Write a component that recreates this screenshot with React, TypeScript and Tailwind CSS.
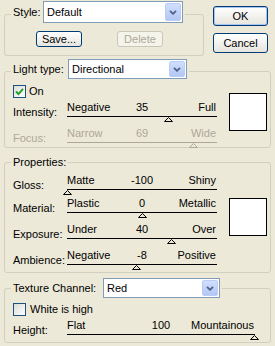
import React from "react";

type SliderProps = {
  left: string;
  value: string;
  right: string;
  frac: number;
  wide?: boolean;
  disabled?: boolean;
};

function Slider({ left, value, right, frac, wide, disabled }: SliderProps) {
  const width = wide ? 188 : 150;
  const offset = Math.round(frac * (width - 1)) - 4;
  const text = disabled ? "text-[#ACA899]" : "text-black";
  const line = disabled ? "bg-[#ACA899]" : "bg-black";
  const stroke = disabled ? "#ACA899" : "#000000";

  return (
    <div className={`flex flex-col ${wide ? "w-[188px]" : "w-[150px]"}`}>
      <div className={`grid grid-cols-[1fr_auto_1fr] h-[13px] leading-[13px] ${text}`}>
        <span className="justify-self-start">{left}</span>
        <span>{value}</span>
        <span className="justify-self-end pr-px">{right}</span>
      </div>
      <div className={`mt-[2px] h-px ${line}`} />
      <div className="h-[4px]">
        <svg width="9" height="5" style={{ marginLeft: offset }} className="overflow-visible">
          <polygon points="4.5,0.5 8.5,4.5 0.5,4.5" fill="#ECE9D8" stroke={stroke} strokeWidth="1" />
        </svg>
      </div>
    </div>
  );
}

function SliderRow(props: SliderProps & { label: string; className?: string }) {
  const { label, className, ...rest } = props;
  return (
    <div className={`flex ${className ?? ""}`}>
      <span className={`w-[54px] pt-[5px] ${rest.disabled ? "text-[#ACA899]" : ""}`}>{label}</span>
      <Slider {...rest} />
    </div>
  );
}

function Select({ value, className }: { value: string; className: string }) {
  return (
    <div className={`flex items-center bg-white border border-[#7F9DB9] ${className}`}>
      <span className="flex-1 pl-[3px] leading-[13px]">{value}</span>
      <div className="mr-px w-[16px] h-[calc(100%-2px)] rounded-[2px] border border-[#B9CCF6] bg-linear-to-b from-[#D1DEFD] to-[#B3C7F5] flex items-center justify-center">
        <svg width="8" height="5" viewBox="0 0 8 5">
          <polyline points="1,0.8 4,3.8 7,0.8" fill="none" stroke="#4D6185" strokeWidth="1.8" />
        </svg>
      </div>
    </div>
  );
}

function Checkbox({ checked }: { checked?: boolean }) {
  return (
    <div className="w-[13px] h-[13px] border border-[#1C5180] bg-linear-to-br from-[#DCDCD7] to-white flex items-center justify-center">
      {checked && (
        <svg width="9" height="9" viewBox="0 0 9 9">
          <polyline points="1,4.5 3.5,7 8,1.8" fill="none" stroke="#21A121" strokeWidth="1.9" />
        </svg>
      )}
    </div>
  );
}

function XpButton({ children, className, disabled }: { children: React.ReactNode; className: string; disabled?: boolean }) {
  return (
    <button
      className={`rounded-[3px] border leading-[13px] ${
        disabled
          ? "border-[#C9C7BA] bg-[#F5F4EA] text-[#ACA899]"
          : "border-[#003C74] bg-linear-to-b from-white to-[#E6E5DE]"
      } ${className}`}
    >
      {children}
    </button>
  );
}

export default function App() {
  return (
    <div className="w-[275px] h-[346px] overflow-hidden bg-[#ECE9D8] text-black text-[11px] leading-[13px] font-['Liberation_Sans',Arial,sans-serif]">
      <div className="flex">
        <fieldset className="ml-[4px] mt-[1px] w-[200px] h-[55px] border border-[#D0D0BF] rounded-[3px]">
          <legend className="ml-[6px] px-[2px] pb-[4px]">
            <div className="flex items-center">
              <span className="w-[30px]">Style:</span>
              <Select value="Default" className="w-[140px] h-[22px]" />
            </div>
          </legend>
          <div className="flex mt-[4px] pl-[31px]">
            <XpButton className="w-[46px] h-[16px]">Save...</XpButton>
            <XpButton className="ml-[35px] w-[46px] h-[16px]" disabled>
              Delete
            </XpButton>
          </div>
        </fieldset>
        <div className="ml-auto mr-[7px] pt-[6px] flex flex-col gap-[7px]">
          <XpButton className="w-[55px] h-[20px] shadow-[inset_0_0_0_1px_#A8C4F0]">OK</XpButton>
          <XpButton className="w-[55px] h-[20px]">Cancel</XpButton>
        </div>
      </div>

      <fieldset className="ml-[4px] mt-[3px] w-[267px] border border-[#D0D0BF] rounded-[3px]">
        <legend className="ml-[6px] px-[2px] pb-[4px]">
          <div className="flex items-center">
            <span className="w-[55px]">Light type:</span>
            <Select value="Directional" className="w-[119px] h-[20px]" />
          </div>
        </legend>
        <div className="flex pl-[8px]">
          <div className="flex flex-col w-[204px]">
            <div className="mt-[2px] flex items-center h-[13px]">
              <Checkbox checked />
              <span className="ml-[3px]">On</span>
            </div>
            <SliderRow className="mt-[3px]" label="Intensity:" left="Negative" value="35" right="Full" frac={0.675} />
            <SliderRow className="mt-[6px]" label="Focus:" left="Narrow" value="69" right="Wide" frac={0.845} disabled />
          </div>
          <div className="ml-[12px] mt-[10px] w-[38px] h-[38px] bg-white border border-black" />
        </div>
      </fieldset>

      <fieldset className="ml-[4px] mt-[8px] w-[267px] border border-[#D0D0BF] rounded-[3px]">
        <legend className="ml-[6px] px-[2px]">Properties:</legend>
        <div className="flex pl-[8px] pb-[3px]">
          <div className="flex flex-col w-[204px]">
            <SliderRow className="mt-[5px]" label="Gloss:" left="Matte" value="-100" right="Shiny" frac={0} />
            <SliderRow className="mt-[3px]" label="Material:" left="Plastic" value="0" right="Metallic" frac={0.5} />
            <SliderRow className="mt-[6px]" label="Exposure:" left="Under" value="40" right="Over" frac={0.7} />
            <SliderRow className="mt-[6px]" label="Ambience:" left="Negative" value="-8" right="Positive" frac={0.46} />
          </div>
          <div className="ml-[12px] mt-[29px] w-[38px] h-[38px] bg-white border border-black" />
        </div>
      </fieldset>

      <fieldset className="ml-[4px] mt-[5px] w-[267px] border border-[#D0D0BF] rounded-[3px]">
        <legend className="ml-[6px] px-[2px]">
          <div className="flex items-center">
            <span className="w-[90px]">Texture Channel:</span>
            <Select value="Red" className="w-[117px] h-[20px]" />
          </div>
        </legend>
        <div className="flex flex-col pl-[8px] pb-[3px]">
          <div className="mt-[5px] flex items-center h-[13px]">
            <Checkbox />
            <span className="ml-[4px]">White is high</span>
          </div>
          <SliderRow className="mt-[3px]" label="Height:" left="Flat" value="100" right="Mountainous" frac={1} wide />
        </div>
      </fieldset>
    </div>
  );
}
